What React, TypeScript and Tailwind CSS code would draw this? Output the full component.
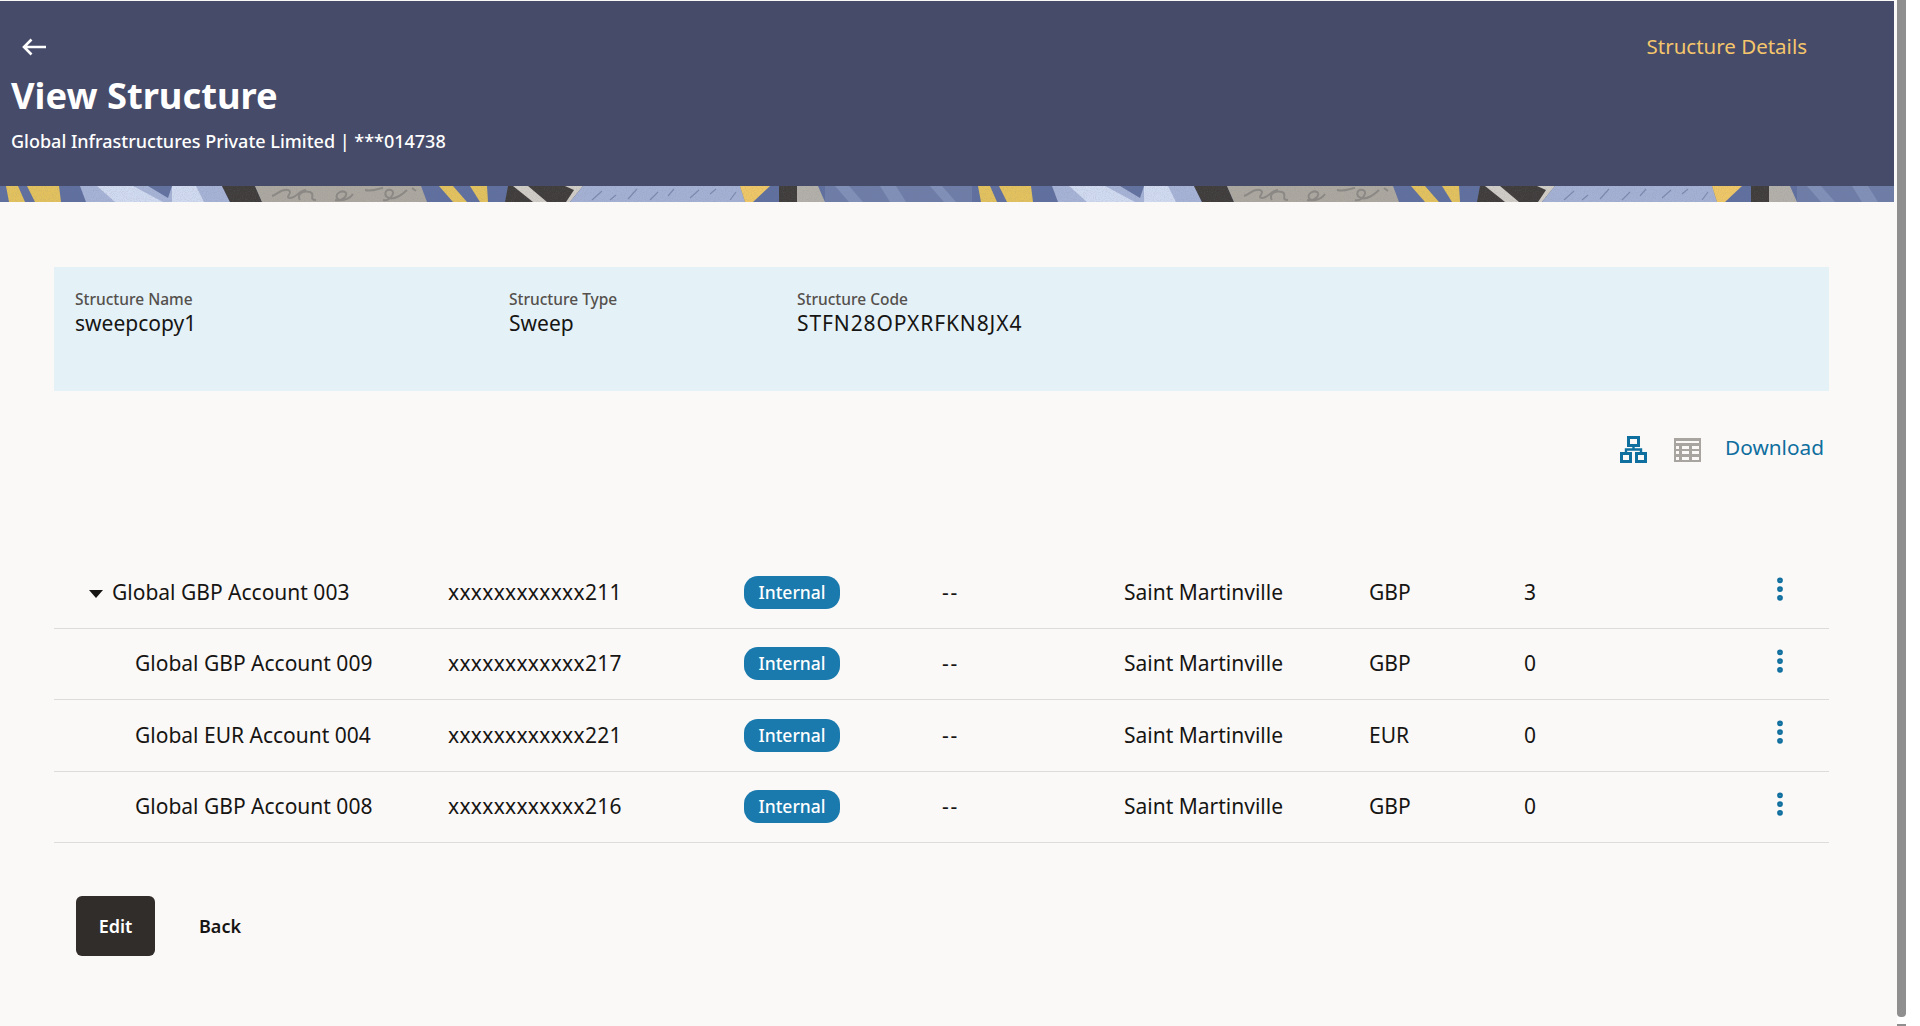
import { MoreVertical } from "lucide-react";

// ==================== DATA ==================== //
const accounts = [
  { name: "Global GBP Account 003", no: "xxxxxxxxxxxx211", ccy: "GBP", count: "3", parent: true },
  { name: "Global GBP Account 009", no: "xxxxxxxxxxxx217", ccy: "GBP", count: "0" },
  { name: "Global EUR Account 004", no: "xxxxxxxxxxxx221", ccy: "EUR", count: "0" },
  { name: "Global GBP Account 008", no: "xxxxxxxxxxxx216", ccy: "GBP", count: "0" },
];

const info = [
  { label: "Structure Name", value: "sweepcopy1", width: "w-[434px]", valueClass: "" },
  { label: "Structure Type", value: "Sweep", width: "w-[288px]", valueClass: "" },
  { label: "Structure Code", value: "STFN28OPXRFKN8JX4", width: "", valueClass: "tracking-[0.9px]" },
];

// repeating strip under the page title
function BandPattern() {
  return (
    <svg width="100%" height="16" className="block">
      <defs>
        <filter id="grain" x="0" y="0" width="100%" height="100%">
          <feTurbulence type="fractalNoise" baseFrequency="0.9" numOctaves="2" seed="4" />
          <feColorMatrix values="0 0 0 0 0.2  0 0 0 0 0.2  0 0 0 0 0.25  0 0 0 1.1 -0.45" />
        </filter>
        <pattern id="band" patternUnits="userSpaceOnUse" width="972" height="16">
          <rect width="972" height="16" fill="#5f6f9f" />
          <path d="M6 0h12l7 16H9z" fill="#e3c25e" />
          <path d="M27 0h32l2 16H35z" fill="#e3c25e" />
          <path d="M80 0h142l8 16H86z" fill="#a6b3d6" />
          <path d="M97 0h36l30 16h-48z" fill="#d0daf0" />
          <path d="M172 0h24l8 16h-32z" fill="#d0daf0" />
          <path d="M148 0h24l-4 12z" fill="#6272a0" />
          <path d="M222 0h33l7 16h-32z" fill="#3f3c3b" />
          <path d="M255 0h166l6 16H262z" fill="#aca8a0" />
          <path
            d="M272 10c6-2 10-8 16-6s-4 8 2 8 10-8 16-8M300 14c-4-6 4-10 10-8s-2 8 6 8M335 14c8 2 14-6 10-8s-10 2-8 6 12 2 16-4M365 4c8 2 14-2 18-2M383 14c6 2 14-8 8-10s-8 6-2 8 14-4 18-8M412 2l4 3"
            fill="none"
            stroke="#8c8985"
            strokeWidth="2"
          />
          <path d="M439 0h14l14 16h-14z" fill="#e3c25e" />
          <path d="M470 0h17l1 16h-8z" fill="#e3c25e" />
          <path d="M508 0h75l-13 16h-65z" fill="#3f3c3b" />
          <path d="M513 0h15l19 16h-14z" fill="#d0cdc7" />
          <path d="M565 0h18l-13 16h-4l8-12z" fill="#d0cdc7" />
          <path d="M583 0h157l5 16H570z" fill="#a4b1d4" />
          <path
            d="M592 14l10-9M610 14l6-5M628 13l9-10M650 14l8-8M668 10l6-7M690 12l9-8M710 8l6-5M730 14l6-8"
            fill="none"
            stroke="#7c8ab0"
            strokeWidth="1.2"
          />
          <path d="M740 0h30l-17 16h-8z" fill="#efc766" />
          <path d="M779 0h18v16h-18z" fill="#3f3c3b" />
          <path d="M797 0h21l7 16h-28z" fill="#b3b0aa" />
          <path d="M825 0h153v16H825z" fill="#6e7da8" />
          <path d="M835 0h14l14 16h-14zM880 0h16l10 16h-16zM930 0h12l14 16h-12z" fill="#8090b8" />
        </pattern>
      </defs>
      <rect width="100%" height="16" fill="url(#band)" />
      <rect width="100%" height="16" filter="url(#grain)" opacity="0.35" />
    </svg>
  );
}

function HierarchyIcon() {
  return (
    <svg width="27" height="27" viewBox="0 0 27 27" fill="none" stroke="#0f6f9e" strokeWidth="3">
      <rect x="8.5" y="1.5" width="10" height="8" />
      <rect x="1.5" y="17.5" width="9" height="8" />
      <rect x="16.5" y="17.5" width="9" height="8" />
      <path d="M13.5 10v3.5M6 17v-3.5h15V17" strokeWidth="2.4" />
    </svg>
  );
}

function TableIcon() {
  return (
    <svg width="27" height="24" viewBox="0 0 27 24">
      <rect width="27" height="24" fill="#a8a4a0" />
      <path d="M2 3h23v2H2zM2 8h3v3H2zM8 8h7v3H8zM18 8h7v3h-7zM2 13h3v3H2zM8 13h7v3H8zM18 13h7v3h-7zM2 19h3v3H2zM8 19h7v3H8zM18 19h7v3h-7z" fill="#fbf9f8" />
    </svg>
  );
}

function AccountRow({ row }: { row: (typeof accounts)[number] }) {
  return (
    <div className="grid h-[71.5px] grid-cols-[394px_296px_198px_182px_245px_155px_1fr] items-center border-b border-[#dedcda] text-[#161513]">
      <div className={row.parent ? "flex items-center pl-[35px]" : "pl-[81px]"}>
        {row.parent && <span className="mr-[9px] mt-[3px] h-0 w-0 border-x-[7.5px] border-t-[8px] border-x-transparent border-t-[#161513]" />}
        {row.name}
      </div>
      <div className="tracking-[0.3px]">{row.no}</div>
      <div>
        <span className="flex h-[33px] w-[96px] items-center justify-center rounded-[14px] bg-[#1a7aad] pb-px text-[17.5px] font-medium text-white">
          Internal
        </span>
      </div>
      <div className="tracking-[1.8px]">--</div>
      <div>Saint Martinville</div>
      <div>{row.ccy}</div>
      <div className="flex items-center justify-between">
        {row.count}
        <MoreVertical size={30} strokeWidth={2.6} className="mr-[34px] mt-[-6px] text-[#0f6f9e]" />
      </div>
    </div>
  );
}

export default function App() {
  return (
    <div className="flex h-[1026px] w-[1920px] overflow-hidden bg-white font-['Noto_Sans',sans-serif]">
      <main className="h-full w-[1897px] bg-[#fbf9f8]">
        <div className="mr-[3px] pt-px">
          <header className="flex h-[185px] items-start justify-between bg-[#464b69] pl-[11px] pr-[87px] text-white">
            <div>
              <svg width="24" height="18" viewBox="0 0 24 18" fill="none" stroke="white" strokeWidth="2.6" className="ml-[11px] mt-[37px]">
                <path d="M24 9H2M9.5 1.5 2 9l7.5 7.5" />
              </svg>
              <h1 className="mt-[15px] text-[36.3px] font-bold leading-[48px]">View Structure</h1>
              <p className="mt-[9px] text-[18px] font-medium leading-[26px]">Global Infrastructures Private Limited | ***014738</p>
            </div>
            <a className="mt-[31px] text-[20.5px] leading-[28px] text-[#f5c66b]">Structure Details</a>
          </header>
          <BandPattern />
        </div>

        <section className="ml-[54px] mr-[68px] pt-[65px]">
          <div className="flex h-[124px] bg-[#e4f2f8] pl-[21px] pt-[21px]">
            {info.map((item) => (
              <div key={item.label} className={item.width}>
                <p className="text-[15.5px] font-medium leading-[22px] text-[#55504c]">{item.label}</p>
                <p className={"text-[21px] leading-[27px] text-[#161513] " + item.valueClass}>{item.value}</p>
              </div>
            ))}
          </div>

          <div className="flex h-[166px] items-start justify-end pr-[5px] pt-[42px]">
            <div className="mt-[3px]"><HierarchyIcon /></div>
            <div className="ml-[27px] mt-[5px]"><TableIcon /></div>
            <a className="ml-[24px] text-[20.8px] leading-[28px] text-[#0f6f9e]">Download</a>
          </div>

          <div className="text-[21px]">
            {accounts.map((row) => (
              <AccountRow key={row.name} row={row} />
            ))}
          </div>

          <div className="flex items-center pl-[22px] pt-[53px]">
            <button className="h-[60px] w-[79px] rounded-[6px] bg-[#312d2a] text-[18px] font-semibold text-white">Edit</button>
            <button className="ml-[44px] text-[18px] font-semibold text-[#161513]">Back</button>
          </div>
        </section>
      </main>

      <div className="w-[9px]">
        <div className="h-[1017px] rounded-b-[4px] bg-[#8f8f8f]" />
        <div className="mt-[7px] h-[2px] bg-[#8f8f8f]" />
      </div>
    </div>
  );
}
